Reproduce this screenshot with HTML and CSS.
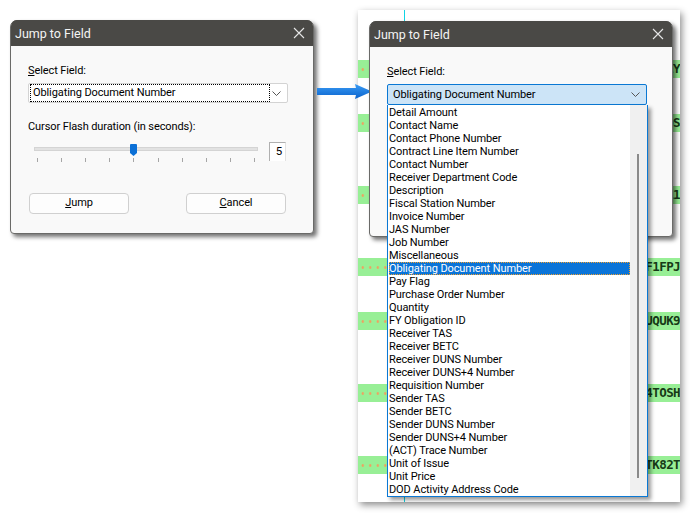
FILE: index.html
```html
<!DOCTYPE html>
<html>
<head>
<meta charset="utf-8">
<link rel="stylesheet" href="styles.css">
</head>
<body>
<div class="stage">
  <div class="panel">
    <div class="cyan-line"></div>
    <div class="rows">
      <div class="row hl"><span class="dots"></span><span class="code">EY</span></div>
      <div class="row"></div>
      <div class="row"></div>
      <div class="row hl"><span class="dots"></span><span class="code">OS</span></div>
      <div class="row"></div>
      <div class="row"></div>
      <div class="row"></div>
      <div class="row hl"><span class="dots"></span><span class="code">L1</span></div>
      <div class="row"></div>
      <div class="row"></div>
      <div class="row"></div>
      <div class="row hl"><span class="dots"></span><span class="code">F1FPJ</span></div>
      <div class="row"></div>
      <div class="row"></div>
      <div class="row hl"><span class="dots"></span><span class="code">UQUK9</span></div>
      <div class="row"></div>
      <div class="row"></div>
      <div class="row"></div>
      <div class="row hl"><span class="dots"></span><span class="code">4TOSH</span></div>
      <div class="row"></div>
      <div class="row"></div>
      <div class="row"></div>
      <div class="row hl"><span class="dots"></span><span class="code">TK82T</span></div>
      <div class="row"></div>
      <div class="row"></div>
    </div>
  </div>

  <div class="dialog d1">
    <div class="titlebar">
      <span class="title">Jump to Field</span>
      <svg class="close" width="12" height="12" viewBox="0 0 12 12"><path d="M1 1 L11 11 M11 1 L1 11" stroke="#e6e6e6" stroke-width="1.1" fill="none"/></svg>
    </div>
    <div class="body">
      <div class="label"><u>S</u>elect Field:</div>
      <div class="combo">
        <span class="combo-text focus">Obligating Document Number</span>
        <svg class="chev" width="9" height="5" viewBox="0 0 9 5"><path d="M0.5 0.5 L4.5 4.5 L8.5 0.5" stroke="#555" fill="none"/></svg>
      </div>
      <div class="label label2">Cursor Flash duration (in seconds):</div>
      <div class="slider-row">
        <div class="slider">
          <div class="track"></div>
          <div class="thumb"></div>
          <div class="ticks"><i></i><i></i><i></i><i></i><i></i><i></i><i></i><i></i><i></i><i></i></div>
        </div>
        <div class="valbox">5</div>
      </div>
      <div class="buttons">
        <div class="btn"><u>J</u>ump</div>
        <div class="btn"><u>C</u>ancel</div>
      </div>
    </div>
  </div>

  <svg class="arrow" width="58" height="17" viewBox="0 0 58 17">
    <defs>
      <linearGradient id="ag" x1="0" y1="0" x2="0" y2="1">
        <stop offset="0" stop-color="#3a9cf5"/>
        <stop offset="1" stop-color="#0a62cc"/>
      </linearGradient>
    </defs>
    <path d="M1 5 L40 5 L39 1 L56 8.5 L39 16 L40 12 L1 12 Z" fill="url(#ag)"/>
  </svg>

  <div class="dialog d2">
    <div class="titlebar">
      <span class="title">Jump to Field</span>
      <svg class="close" width="12" height="12" viewBox="0 0 12 12"><path d="M1 1 L11 11 M11 1 L1 11" stroke="#e6e6e6" stroke-width="1.1" fill="none"/></svg>
    </div>
    <div class="body">
      <div class="label"><u>S</u>elect Field:</div>
      <div class="combo open">
        <span class="combo-text">Obligating Document Number</span>
        <svg class="chev" width="9" height="5" viewBox="0 0 9 5"><path d="M0.5 0.5 L4.5 4.5 L8.5 0.5" stroke="#555" fill="none"/></svg>
        <div class="droplist">
          <div class="items">
            <div class="item">Detail Amount</div>
            <div class="item">Contact Name</div>
            <div class="item">Contact Phone Number</div>
            <div class="item">Contract Line Item Number</div>
            <div class="item">Contact Number</div>
            <div class="item">Receiver Department Code</div>
            <div class="item">Description</div>
            <div class="item">Fiscal Station Number</div>
            <div class="item">Invoice Number</div>
            <div class="item">JAS Number</div>
            <div class="item">Job Number</div>
            <div class="item">Miscellaneous</div>
            <div class="item sel">Obligating Document Number</div>
            <div class="item">Pay Flag</div>
            <div class="item">Purchase Order Number</div>
            <div class="item">Quantity</div>
            <div class="item">FY Obligation ID</div>
            <div class="item">Receiver TAS</div>
            <div class="item">Receiver BETC</div>
            <div class="item">Receiver DUNS Number</div>
            <div class="item">Receiver DUNS+4 Number</div>
            <div class="item">Requisition Number</div>
            <div class="item">Sender TAS</div>
            <div class="item">Sender BETC</div>
            <div class="item">Sender DUNS Number</div>
            <div class="item">Sender DUNS+4 Number</div>
            <div class="item">(ACT) Trace Number</div>
            <div class="item">Unit of Issue</div>
            <div class="item">Unit Price</div>
            <div class="item">DOD Activity Address Code</div>
          </div>
          <div class="scrollbar"><div class="sthumb"></div></div>
        </div>
      </div>
    </div>
  </div>
</div>
</body>
</html>
```

FILE: styles.css
```css
* { box-sizing: border-box; }
html, body { margin: 0; padding: 0; background: #ffffff; }
body { font-family: Roboto, "Liberation Sans", sans-serif; font-size: 11px; letter-spacing: -0.1px; color: #000; }
u { text-decoration: underline; text-underline-offset: 1px; }

.stage { position: relative; width: 692px; height: 514px; overflow: hidden; background: #fff; }

/* background application window */
.panel {
  position: absolute; left: 358px; top: 10px; width: 322px; height: 492px;
  background: #fff; overflow: hidden;
  box-shadow: 2px 3px 7px rgba(0,0,0,0.45);
}
.cyan-line { position: absolute; left: 46px; top: 0; bottom: 0; width: 1px; background: #10d4e4; }
.rows { padding-top: 50px; display: flex; flex-direction: column; }
.row { height: 18px; display: flex; align-items: center; justify-content: space-between; }
.row.hl { background: #98ef96; }
.dots {
  width: 32px; height: 3px; margin-left: 1px;
  background-image: radial-gradient(circle, #f0a060 1px, transparent 1.5px);
  background-size: 7.5px 3px; background-repeat: repeat-x;
}
.code {
  font-family: "DejaVu Sans Mono", "Liberation Mono", monospace; font-weight: bold; font-size: 12.5px;
  color: #173a17; margin-right: 0; line-height: 18px; letter-spacing: -0.6px;
}

/* dialogs */
.dialog {
  position: absolute; width: 304px; background: #f9f9f9;
  border: 1px solid #6a6a68; border-radius: 7px 7px 4px 4px;
  box-shadow: 3px 3px 4px rgba(0,0,0,0.55);
  display: flex; flex-direction: column;
}
.d1 { left: 10px; top: 20px; height: 214px; }
.d2 { left: 369px; top: 21px; height: 216px; }
.titlebar {
  height: 26px; flex: none; background: #4a4946; border-radius: 6px 6px 0 0;
  display: flex; align-items: center; justify-content: space-between;
  padding: 0 8px 0 4px; margin-top: -1px;
}
.title { color: #f4f4f4; font-size: 12.5px; letter-spacing: 0; }
.close { display: block; }

.body { padding: 18px 0 0 17px; display: flex; flex-direction: column; flex: 1; }
.label { line-height: 14px; height: 14px; }
.combo {
  position: relative; margin-top: 5px; width: 260px; height: 20px;
  background: #fff; border: 1px solid #d3d3d3; border-radius: 2px;
  display: flex; align-items: center; justify-content: space-between; padding: 0 5px 0 2px;
}
.combo-text { line-height: 14px; padding: 0 2px; }
.combo-text.focus { outline: 1px dotted #000; outline-offset: 0; width: 238px; height: 16px; line-height: 15px; }
.combo.open { background: #cce4f7; border-color: #0a78d4; height: 21px; padding-left: 3px; }
.chev { display: block; margin-right: 1px; }

.label2 { margin-top: 17px; }
.slider-row { margin-top: 8px; display: flex; height: 20px; }
.slider { position: relative; margin-left: 6px; width: 224px; height: 20px; }
.track { margin-top: 5px; height: 4px; background: #e2e2e2; border: 1px solid #d4d4d4; }
.thumb {
  position: absolute; left: 96px; top: 2px; width: 7px; height: 12px;
  background: #0a6fd6; border-radius: 1px 1px 0 0;
  clip-path: polygon(0 0, 100% 0, 100% 75%, 50% 100%, 0 75%);
}
.ticks { display: flex; justify-content: space-between; padding: 0 3px; margin-top: 7px; }
.ticks i { display: block; width: 1px; height: 4px; background: #a6a6a6; }
.valbox {
  margin-left: 11px; width: 17px; height: 19px; background: #fff;
  border-left: 1px solid #b0b0b0; border-top: 1px solid #b0b0b0; border-right: 1px solid #e2e2e2;
  text-align: right; padding-right: 3px; line-height: 16px; font-size: 11.5px;
}
.buttons { margin-top: 31px; width: 257px; margin-left: 1px; display: flex; justify-content: space-between; }
.btn {
  width: 100px; height: 21px; background: #fdfdfd; border: 1px solid #d0d0d0; border-radius: 4px;
  text-align: center; line-height: 18px;
}

/* dropdown list */
.droplist {
  position: absolute; left: -1px; top: 20px; width: 261px; height: 392px;
  background: #fff; border: 1px solid #0a78d4; border-top: none;
  box-shadow: 3px 3px 4px rgba(0,0,0,0.4);
  display: flex; z-index: 2;
}
.items { flex: 1; padding-top: 1px; }
.item { height: 13px; line-height: 13px; padding-left: 1px; white-space: nowrap; }
.item.sel { background: #0a74d8; color: #fff; margin-left: 1px; padding-left: 0; outline: 1px dotted #f0a030; outline-offset: -1px; }
.scrollbar { width: 17px; background: #f0f0f0; position: relative; }
.sthumb { margin: 49px 0 0 7px; width: 2px; height: 324px; background: #8a8a8a; }

.arrow { position: absolute; left: 316px; top: 83px; }
```
